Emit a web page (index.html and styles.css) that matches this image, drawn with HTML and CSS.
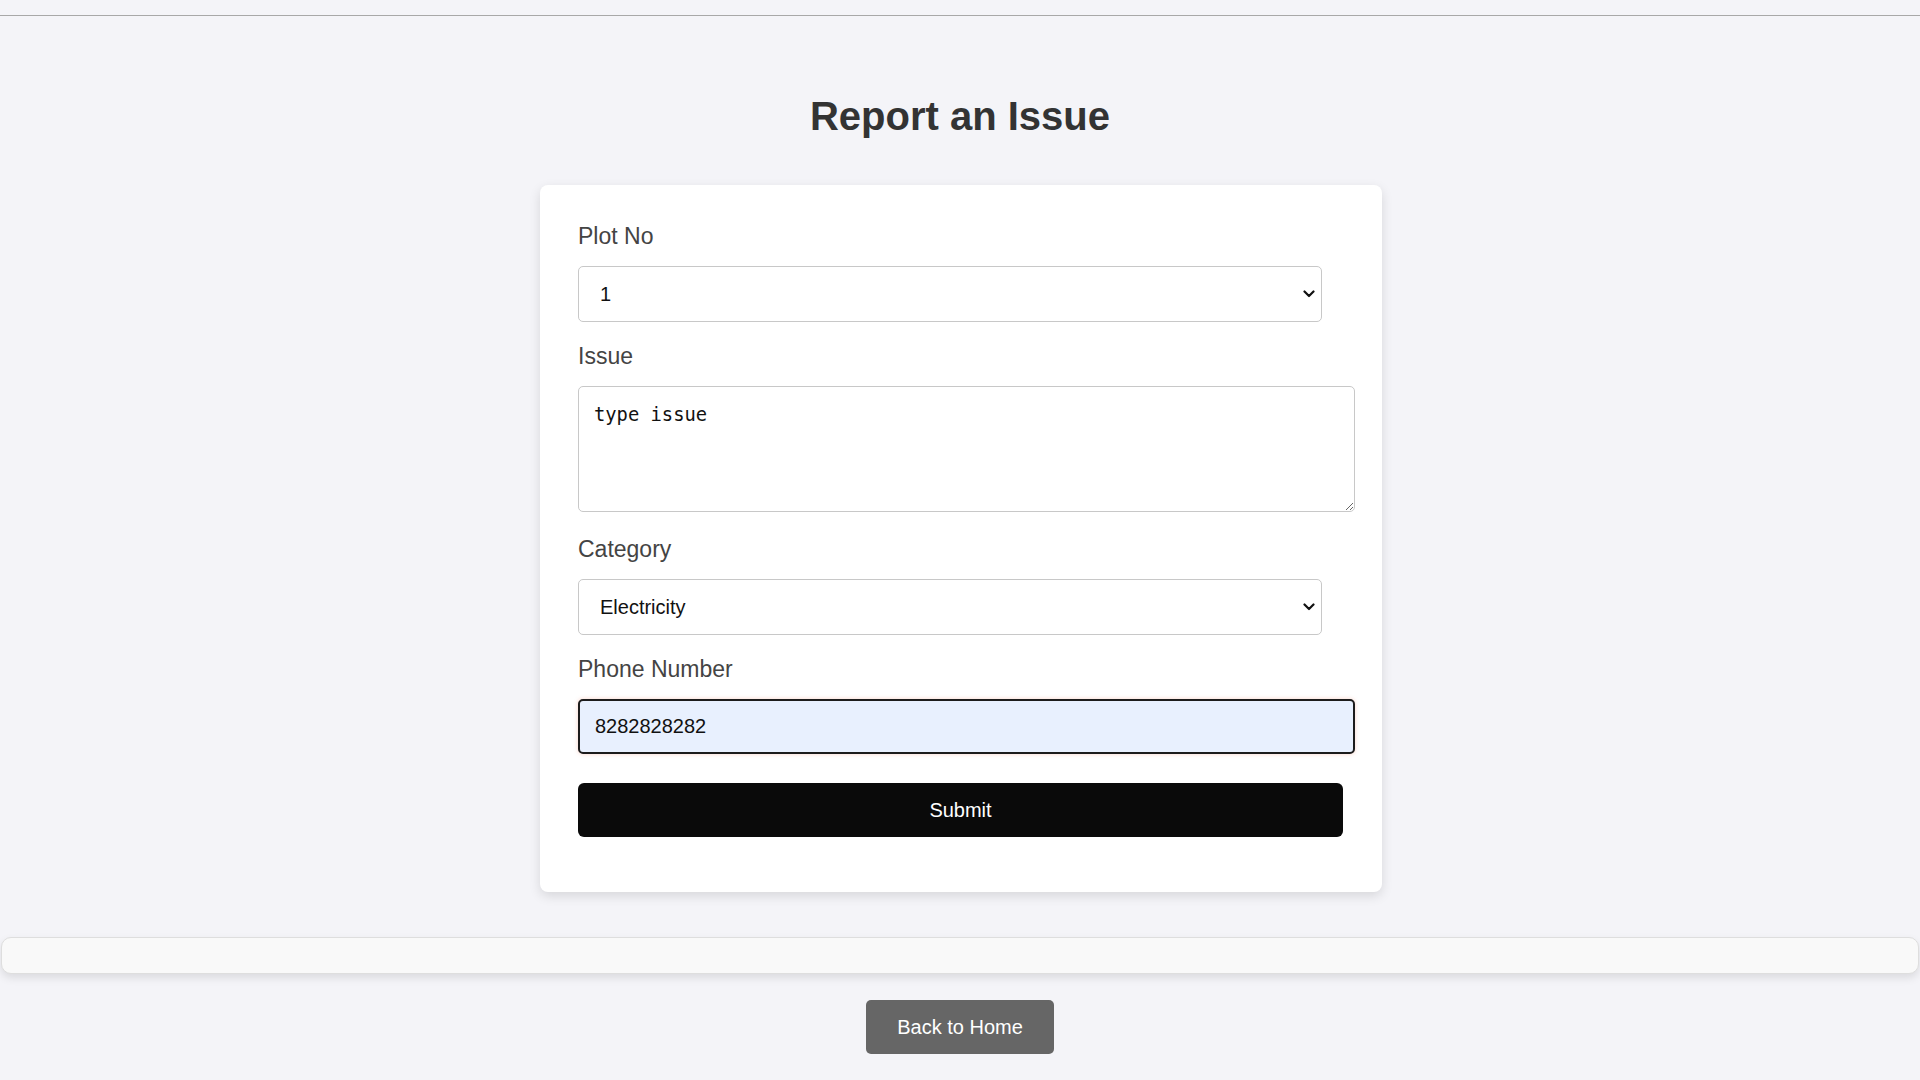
FILE: index.html
```html
<!DOCTYPE html>
<html lang="en">
<head>
<meta charset="utf-8">
<title>Report an Issue</title>
<link rel="stylesheet" href="styles.css">
</head>
<body>
<div class="topbar"></div>
<main class="page">
  <h1 class="title">Report an Issue</h1>
  <form class="card">
    <label class="label" for="plot">Plot No</label>
    <div class="select-wrap">
      <select id="plot" class="select"><option>1</option><option>2</option></select>
      <svg class="chev" width="12" height="8" viewBox="0 0 12 8"><path d="M1.5 1.5 L6 6 L10.5 1.5" fill="none" stroke="#111" stroke-width="2.2" stroke-linecap="round" stroke-linejoin="round"/></svg>
    </div>
    <label class="label" for="issue">Issue</label>
    <textarea id="issue" class="textarea">type issue</textarea>
    <label class="label" for="cat">Category</label>
    <div class="select-wrap">
      <select id="cat" class="select"><option>Electricity</option><option>Water</option></select>
      <svg class="chev" width="12" height="8" viewBox="0 0 12 8"><path d="M1.5 1.5 L6 6 L10.5 1.5" fill="none" stroke="#111" stroke-width="2.2" stroke-linecap="round" stroke-linejoin="round"/></svg>
    </div>
    <label class="label" for="phone">Phone Number</label>
    <input id="phone" class="input input-focus" type="text" value="8282828282">
    <button type="button" class="submit">Submit</button>
  </form>
  <div class="footer-bar"></div>
  <div class="home-row"><a class="home-btn" href="#">Back to Home</a></div>
</main>
</body>
</html>
```
FILE: styles.css
```css
html, body {
  margin: 0;
  padding: 0;
  background: #f4f4f8;
  font-family: "Liberation Sans", Arial, sans-serif;
}
.topbar {
  height: 15px;
  border-bottom: 1px solid #a8a8a8;
}
.page {
  display: flex;
  flex-direction: column;
  align-items: center;
}
.title {
  margin: 77px 0 46px;
  font-size: 40px;
  line-height: 46px;
  font-weight: bold;
  color: #333;
}
.card {
  box-sizing: border-box;
  width: 842px;
  margin-left: 2px;
  padding: 38px 39px 55px 38px;
  background: #fff;
  border-radius: 8px;
  box-shadow: 0 4px 12px rgba(0, 0, 0, 0.12);
  display: flex;
  flex-direction: column;
  align-items: flex-start;
}
.label {
  display: block;
  font-size: 23px;
  line-height: 26px;
  color: #444;
  margin-bottom: 17px;
}
.select-wrap {
  position: relative;
  width: 744px;
  height: 56px;
  margin-bottom: 21px;
}
.select {
  appearance: none;
  -webkit-appearance: none;
  box-sizing: border-box;
  width: 100%;
  height: 100%;
  border: 1px solid #c8c8c8;
  border-radius: 5px;
  background: #fff;
  padding: 0 21px;
  font-family: "Liberation Sans", Arial, sans-serif;
  font-size: 20px;
  color: #111;
}
.chev {
  position: absolute;
  right: 7px;
  top: 24px;
  pointer-events: none;
}
.textarea {
  display: block;
  box-sizing: border-box;
  width: 777px;
  height: 126px;
  margin: 0 0 24px;
  padding: 16px 15px;
  border: 1px solid #c8c8c8;
  border-radius: 5px;
  font-family: "DejaVu Sans Mono", "Liberation Mono", monospace;
  font-size: 18.8px;
  line-height: 24px;
  color: #111;
  background: #fff;
}
.input {
  display: block;
  box-sizing: border-box;
  width: 777px;
  height: 55px;
  margin: 0 0 29px;
  padding: 0 15px;
  border-radius: 5px;
  font-family: "Liberation Sans", Arial, sans-serif;
  font-size: 20px;
  color: #111;
}
.input-focus {
  border: 2px solid #1c1c1c;
  background: #e8f0fe;
  box-shadow: 0 0 4px rgba(240, 130, 100, 0.35);
  outline: none;
}
.submit {
  width: 765px;
  height: 54px;
  border: none;
  border-radius: 6px;
  background: #0a0a0a;
  color: #fff;
  font-family: "Liberation Sans", Arial, sans-serif;
  font-size: 20px;
  cursor: pointer;
}
.footer-bar {
  box-sizing: border-box;
  align-self: stretch;
  margin: 45px 1px 0;
  height: 37px;
  background: #f9f9f9;
  border: 1px solid #dedede;
  border-radius: 10px;
  box-shadow: 0 4px 8px rgba(0, 0, 0, 0.1);
}
.home-row {
  display: flex;
  justify-content: center;
  margin-top: 26px;
}
.home-btn {
  display: block;
  padding: 15px 31px;
  line-height: 24px;
  font-size: 20px;
  color: #fff;
  background: #666;
  border-radius: 5px;
  text-decoration: none;
}
```
